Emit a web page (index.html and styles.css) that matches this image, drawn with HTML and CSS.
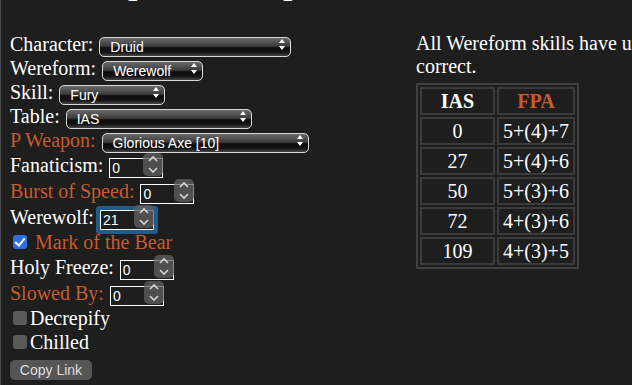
FILE: index.html
```html
<!DOCTYPE html>
<html lang="en">
<head>
    <meta charset="UTF-8">
    <meta name="viewport" content="width=device-width, initial-scale=1.0">
    <title>Wereform Breakpoints</title>
    <link rel="stylesheet" href="styles.css">
</head>
<body>
    <h1>Attack Speed Breakpoints</h1>

    <div class="main">
        <!-- options -->
        <form class="controls" id="calcForm">
            <div class="row">
                <label for="character">Character:</label>
                <span class="select w-char">
                    <select id="character"><option>Druid</option></select>
                </span>
            </div>
            <div class="row">
                <label for="wereform">Wereform:</label>
                <span class="select w-form">
                    <select id="wereform"><option>Werewolf</option></select>
                </span>
            </div>
            <div class="row">
                <label for="skill">Skill:</label>
                <span class="select w-skill">
                    <select id="skill"><option>Fury</option></select>
                </span>
            </div>
            <div class="row">
                <label for="table">Table:</label>
                <span class="select w-table">
                    <select id="table"><option>IAS</option></select>
                </span>
            </div>
            <div class="row">
                <label for="weapon" class="hl">P Weapon:</label>
                <span class="select w-weapon">
                    <select id="weapon"><option>Glorious Axe [10]</option></select>
                </span>
            </div>
            <div class="row num-row">
                <label for="fanaticism">Fanaticism:</label>
                <span class="num">
                    <input type="number" id="fanaticism" value="0">
                    <span class="spin"><svg width="20" height="23" viewBox="0 0 20 23"><path d="M6 8 L10 4 L14 8 M6 15 L10 19 L14 15"/></svg></span>
                </span>
            </div>
            <div class="row num-row">
                <label for="bos" class="hl">Burst of Speed:</label>
                <span class="num">
                    <input type="number" id="bos" value="0">
                    <span class="spin"><svg width="20" height="23" viewBox="0 0 20 23"><path d="M6 8 L10 4 L14 8 M6 15 L10 19 L14 15"/></svg></span>
                </span>
            </div>
            <div class="row num-row">
                <label for="werewolf">Werewolf:</label>
                <span class="num focused">
                    <input type="number" id="werewolf" value="21">
                    <span class="spin"><svg width="20" height="23" viewBox="0 0 20 23"><path d="M6 8 L10 4 L14 8 M6 15 L10 19 L14 15"/></svg></span>
                </span>
            </div>
            <div class="row check-row">
                <input type="checkbox" id="mark" checked>
                <label for="mark" class="hl spaced">Mark of the Bear</label>
            </div>
            <div class="row num-row">
                <label for="holyFreeze">Holy Freeze:</label>
                <span class="num">
                    <input type="number" id="holyFreeze" value="0">
                    <span class="spin"><svg width="20" height="23" viewBox="0 0 20 23"><path d="M6 8 L10 4 L14 8 M6 15 L10 19 L14 15"/></svg></span>
                </span>
            </div>
            <div class="row num-row">
                <label for="slowed" class="hl">Slowed By:</label>
                <span class="num">
                    <input type="number" id="slowed" value="0">
                    <span class="spin"><svg width="20" height="23" viewBox="0 0 20 23"><path d="M6 8 L10 4 L14 8 M6 15 L10 19 L14 15"/></svg></span>
                </span>
            </div>
            <div class="row check-row">
                <input type="checkbox" id="decrepify">
                <label for="decrepify">Decrepify</label>
            </div>
            <div class="row check-row">
                <input type="checkbox" id="chilled">
                <label for="chilled">Chilled</label>
            </div>
            <button type="button" class="copy-btn">Copy Link</button>
        </form>

        <!-- results -->
        <div class="info">
            <p>All Wereform skills have unique breakpoints; these are correct.</p>
            <table class="bp-table">
                <tr><th class="ias">IAS</th><th class="hl">FPA</th></tr>
                <tr><td>0</td><td>5+(4)+7</td></tr>
                <tr><td>27</td><td>5+(4)+6</td></tr>
                <tr><td>50</td><td>5+(3)+6</td></tr>
                <tr><td>72</td><td>4+(3)+6</td></tr>
                <tr><td>109</td><td>4+(3)+5</td></tr>
            </table>
        </div>
    </div>
</body>
</html>
```

FILE: styles.css
```css
html {
    overflow: hidden;
}
body {
    font-family: "Liberation Serif", "Times New Roman", serif;
    font-size: 20px;
    margin: 0;
    padding: 0 0 0 9px;
    border-left: 1px solid #4a4a4a;
    background-color: #1e1e1e;
    color: #fff;
    min-height: 385px;
    box-sizing: border-box;
}
h1 {
    font-size: 32px;
    line-height: 36px;
    margin: -35px 0 31px;
    white-space: nowrap;
}
.hl {
    color: #c75b2e;
}
.main {
    display: flex;
    gap: 6px;
}
.controls {
    width: 400px;
    flex-shrink: 0;
}
.info {
    width: 475px;
    flex-shrink: 0;
}
.info p {
    margin: 0 0 5px;
    line-height: 23px;
}
.row {
    display: flex;
    align-items: center;
    gap: 6px;
    height: 24px;
    white-space: nowrap;
}
.num-row {
    height: 26px;
}
.check-row {
    gap: 3px;
}
.spaced {
    margin-left: 5px;
}

/* selects */
.select {
    position: relative;
    display: inline-block;
    height: 20px;
}
.select select {
    appearance: none;
    -webkit-appearance: none;
    width: 100%;
    height: 20px;
    box-sizing: border-box;
    margin: 0;
    padding: 0 20px 0 10px;
    border: 1px solid #d8d8d8;
    border-radius: 5px;
    background: linear-gradient(to bottom, #6a6a6a 0%, #3c3c3c 45%, #0c0c0c 55%, #141414 80%, #474747 100%);
    color: #fff;
    font-family: "Liberation Sans", Arial, sans-serif;
    font-size: 14px;
}
.select::before,
.select::after {
    content: "";
    position: absolute;
    right: 6px;
    border-left: 3px solid transparent;
    border-right: 3px solid transparent;
    pointer-events: none;
}
.select::before {
    top: 5px;
    border-bottom: 4px solid #fff;
}
.select::after {
    top: 12px;
    border-top: 4px solid #fff;
}
.w-char { width: 192px; }
.w-form { width: 101px; }
.w-skill { width: 106px; }
.w-table { width: 186px; }
.w-weapon { width: 207px; }

/* number inputs */
.num {
    position: relative;
    display: inline-block;
    height: 20px;
}
.num input {
    width: 54px;
    height: 20px;
    box-sizing: border-box;
    margin: 0;
    padding: 0 2px;
    border: 1px solid #fff;
    background: #1e1e1e;
    color: #fff;
    font-family: "Liberation Sans", Arial, sans-serif;
    font-size: 14px;
    outline: none;
    -moz-appearance: textfield;
}
.num input::-webkit-inner-spin-button,
.num input::-webkit-outer-spin-button {
    -webkit-appearance: none;
    margin: 0;
}
.num.focused input {
    border-radius: 1px;
    box-shadow: 0 0 0 4px #215b87;
}
.spin {
    position: absolute;
    right: 0;
    top: -2px;
    width: 20px;
    height: 23px;
    border-radius: 5px;
    background: rgba(98, 98, 98, 0.75);
}
.spin svg {
    display: block;
}
.spin path {
    fill: none;
    stroke: #d4d4d4;
    stroke-width: 1.6;
}

/* checkboxes */
.check-row input {
    appearance: none;
    -webkit-appearance: none;
    position: relative;
    width: 14px;
    height: 14px;
    margin: 0 0 0 3px;
    border-radius: 3px;
    background: #5a5a5a;
}
.check-row input:checked {
    background: #2f6edc;
}
.check-row input:checked::after {
    content: "";
    position: absolute;
    left: 4px;
    top: 1px;
    width: 4px;
    height: 8px;
    border: solid #fff;
    border-width: 0 2px 2px 0;
    transform: rotate(40deg);
}

.copy-btn {
    display: block;
    margin-top: 6px;
    width: 82px;
    height: 20px;
    padding: 0;
    border: none;
    border-radius: 5px;
    background-color: #555;
    color: #ddd;
    font-family: "Liberation Sans", Arial, sans-serif;
    font-size: 14px;
}

/* breakpoint table */
.bp-table {
    border: 2px solid #404040;
    border-spacing: 2px;
}
.bp-table th,
.bp-table td {
    border: 2px solid #3b3b3b;
    padding: 0 4px;
    height: 24px;
    line-height: 24px;
    text-align: center;
}
.bp-table .ias {
    width: 63px;
}
```
